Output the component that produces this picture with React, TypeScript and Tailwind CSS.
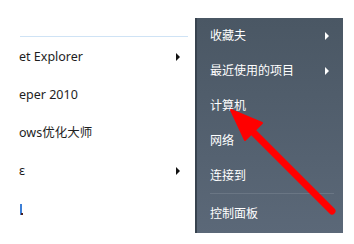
const font = { fontFamily: '"Noto Sans", "Noto Sans CJK SC", sans-serif' };

const BlackArrow = () => (
  <svg width="5" height="8" viewBox="0 0 5 8" className="shrink-0">
    <path d="M0 0 L4 4 L0 8 Z" fill="#111" />
  </svg>
);

const WhiteArrow = () => (
  <svg width="5" height="8" viewBox="0 0 5 8" className="shrink-0">
    <path d="M0 0 L4 4 L0 8 Z" fill="#fff" />
  </svg>
);

const leftRows = [
  { text: 'et Explorer', arrow: true },
  { text: 'eper 2010', arrow: false },
  { text: 'ows优化大师', arrow: false },
  { text: 'ɛ', arrow: true },
];

const rightRows = [
  { text: '收藏夫', arrow: true },
  { text: '最近使用的项目', arrow: true },
  { text: '计算机', arrow: false },
  { text: '网络', arrow: false },
  { text: '连接到', arrow: false },
];

export default function App() {
  return (
    <div className="relative flex w-[354px] h-[244px] bg-white overflow-hidden" style={font}>
      {/* left program list */}
      <div className="w-[195px] shrink-0 flex flex-col">
        <div className="h-[36px]" />
        <div className="ml-[20px] mr-[7px] h-px bg-[#cfe3f5]" />
        <div className="pt-px">
          {leftRows.map((r, i) => (
            <div key={i} className="h-[38px] flex items-center pl-[19px] pr-[14px] justify-between">
              <span className="text-[12.5px] text-[#1e1e1e] leading-none">{r.text}</span>
              {r.arrow && <BlackArrow />}
            </div>
          ))}
          <div className="h-[38px] flex items-center pl-[20px]">
            <div className="relative w-[2px] h-[11px] bg-[#3d7fd6]">
              <div className="absolute bottom-0 left-[1px] w-[2px] h-[2px] bg-[#4a2020]" />
            </div>
          </div>
        </div>
      </div>

      {/* right places panel */}
      <div className="w-[148px] shrink-0 mt-[18px] h-[215px] border-l-2 border-[#38434f] bg-gradient-to-b from-[#4a5764] to-[#5b6878] flex flex-col">
        {rightRows.map((r, i) => (
          <div key={i} className="h-[35px] flex items-center justify-between pl-[13px] pr-[13px]">
            <span className="text-[12px] text-white leading-none">{r.text}</span>
            {r.arrow && <WhiteArrow />}
          </div>
        ))}
        <div className="ml-[13px] mr-[9px] h-px bg-[#3c4753] border-b border-[#6a7684]" />
        <div className="flex-1 flex items-center pl-[13px]">
          <span className="text-[12px] text-white leading-none">控制面板</span>
        </div>
      </div>

      {/* red annotation arrow */}
      <svg className="absolute inset-0 pointer-events-none" width="354" height="244" viewBox="0 0 354 244">
        <line x1="332" y1="211" x2="247" y2="126" stroke="#ff0000" strokeWidth="7" strokeLinecap="round" />
        <path d="M231 110 L245 140 L262 123 Z" fill="#ff0000" stroke="#ff0000" strokeWidth="2" strokeLinejoin="round" />
      </svg>
    </div>
  );
}
